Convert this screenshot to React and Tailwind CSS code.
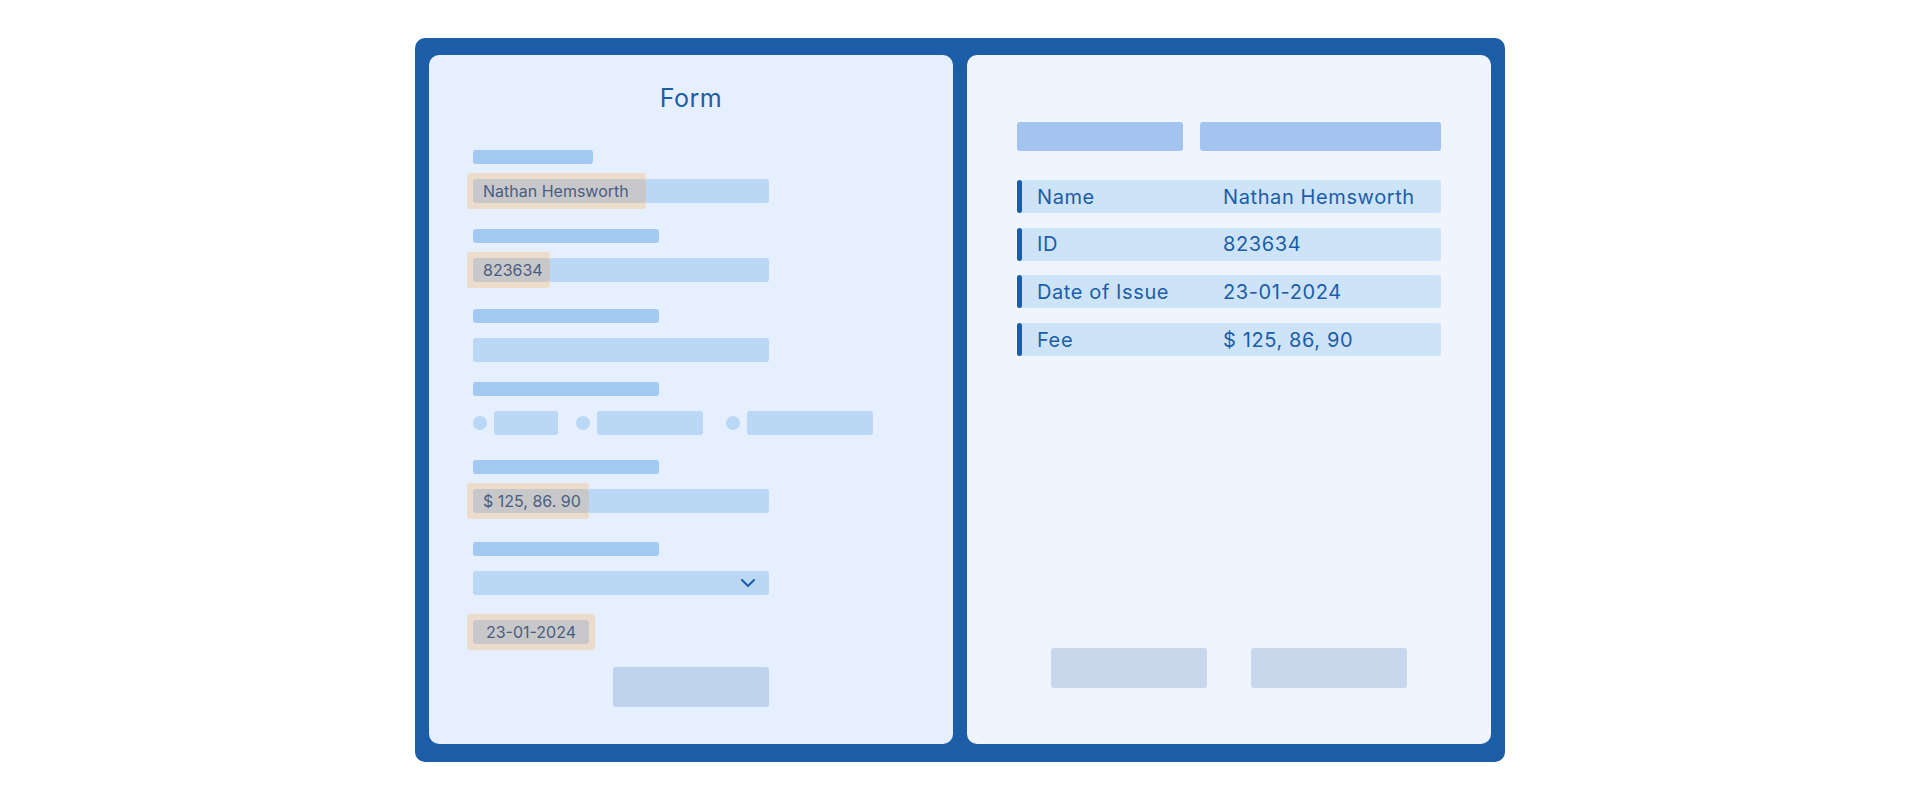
import React from "react";
import { ChevronDown } from "lucide-react";

function LabelBar({ w = "w-[186px]", mt }) {
  return <div className={`h-[14px] ${w} ${mt} rounded-[3px] bg-[#a1c9f1]`} />;
}

function Input({ children, className = "" }) {
  return (
    <div className={`relative h-[24px] w-[296px] rounded-[3px] bg-[#bad7f6] ${className}`}>
      {children}
    </div>
  );
}

function Chip({ w, text }) {
  return (
    <div className="absolute -left-[6px] -top-[6px] -bottom-[6px] flex rounded-[3px] bg-[#ecdccb] py-[6px] pl-[6px]">
      <div className={`${w} flex items-center rounded-[3px] bg-[#c8c8cb] pl-[10px] text-[16px] text-[#4a5d7e] whitespace-nowrap`}>
        {text}
      </div>
    </div>
  );
}

function Row({ label, value }) {
  return (
    <div className="flex h-[33px] items-stretch">
      <div className="w-[5px] rounded-[3px] bg-[#1c5da8]" />
      <div className="flex flex-1 items-center rounded-r-[3px] bg-[#cde3f7] pl-[15px] text-[20px] tracking-[0.03em] text-[#1c5da8]">
        <span className="w-[186px]">{label}</span>
        <span>{value}</span>
      </div>
    </div>
  );
}

export default function App() {
  return (
    <div className="min-h-[800px] w-full bg-white flex justify-center pt-[38px] font-['Inter',sans-serif]">
      <div className="grid h-[724px] w-[1090px] grid-cols-2 gap-[14px] rounded-[10px] bg-[#1c5da8] px-[14px] pt-[17px] pb-[18px]">
        {/* Left panel */}
        <div className="flex flex-col rounded-[10px] bg-[#e5effd] pl-[44px]">
          <div className="mt-[27px] -ml-[44px] text-center text-[25px] leading-[32px] tracking-[0.02em] text-[#1c5da8]">Form</div>

          <LabelBar w="w-[120px]" mt="mt-[36px]" />
          <Input className="mt-[15px]">
            <Chip w="w-[173px]" text="Nathan Hemsworth" />
          </Input>

          <LabelBar mt="mt-[26px]" />
          <Input className="mt-[15px]">
            <Chip w="w-[77px]" text="823634" />
          </Input>

          <LabelBar mt="mt-[27px]" />
          <Input className="mt-[15px]" />

          <LabelBar mt="mt-[20px]" />
          <div className="mt-[15px] flex h-[24px] items-center">
            <div className="h-[14px] w-[14px] rounded-full bg-[#bad7f6]" />
            <div className="ml-[7px] h-[24px] w-[64px] rounded-[3px] bg-[#bad7f6]" />
            <div className="ml-[18px] h-[14px] w-[14px] rounded-full bg-[#bad7f6]" />
            <div className="ml-[7px] h-[24px] w-[106px] rounded-[3px] bg-[#bad7f6]" />
            <div className="ml-[23px] h-[14px] w-[14px] rounded-full bg-[#bad7f6]" />
            <div className="ml-[7px] h-[24px] w-[126px] rounded-[3px] bg-[#bad7f6]" />
          </div>

          <LabelBar mt="mt-[25px]" />
          <Input className="mt-[15px]">
            <Chip w="w-[116px]" text="$ 125, 86. 90" />
          </Input>

          <LabelBar mt="mt-[29px]" />
          <Input className="mt-[15px] flex items-center justify-end pr-[9px]">
            <ChevronDown size={24} strokeWidth={2} className="text-[#1c5da8]" />
          </Input>

          <div className="mt-[19px] w-fit rounded-[3px] bg-[#ecdccb] p-[6px] -ml-[6px]">
            <div className="flex h-[24px] w-[116px] items-center justify-center rounded-[3px] bg-[#c8c8cb] text-[16px] text-[#4a5d7e]">
              23-01-2024
            </div>
          </div>

          <div className="mt-[17px] ml-[140px] h-[40px] w-[156px] rounded-[3px] bg-[#bed2ec]" />
        </div>

        {/* Right panel */}
        <div className="flex flex-col rounded-[10px] bg-[#f0f4fc] px-[50px] pb-[56px]">
          <div className="mt-[67px] flex gap-[17px]">
            <div className="h-[29px] w-[166px] rounded-[3px] bg-[#a3c3f0]" />
            <div className="h-[29px] flex-1 rounded-[3px] bg-[#a3c3f0]" />
          </div>
          <div className="mt-[29px] flex flex-col gap-[14.7px]">
            <Row label="Name" value="Nathan Hemsworth" />
            <Row label="ID" value="823634" />
            <Row label="Date of Issue" value="23-01-2024" />
            <Row label="Fee" value="$ 125, 86, 90" />
          </div>
          <div className="mt-auto flex justify-center gap-[44px]">
            <div className="h-[40px] w-[156px] rounded-[3px] bg-[#c8d7ec]" />
            <div className="h-[40px] w-[156px] rounded-[3px] bg-[#c8d7ec]" />
          </div>
        </div>
      </div>
    </div>
  );
}
